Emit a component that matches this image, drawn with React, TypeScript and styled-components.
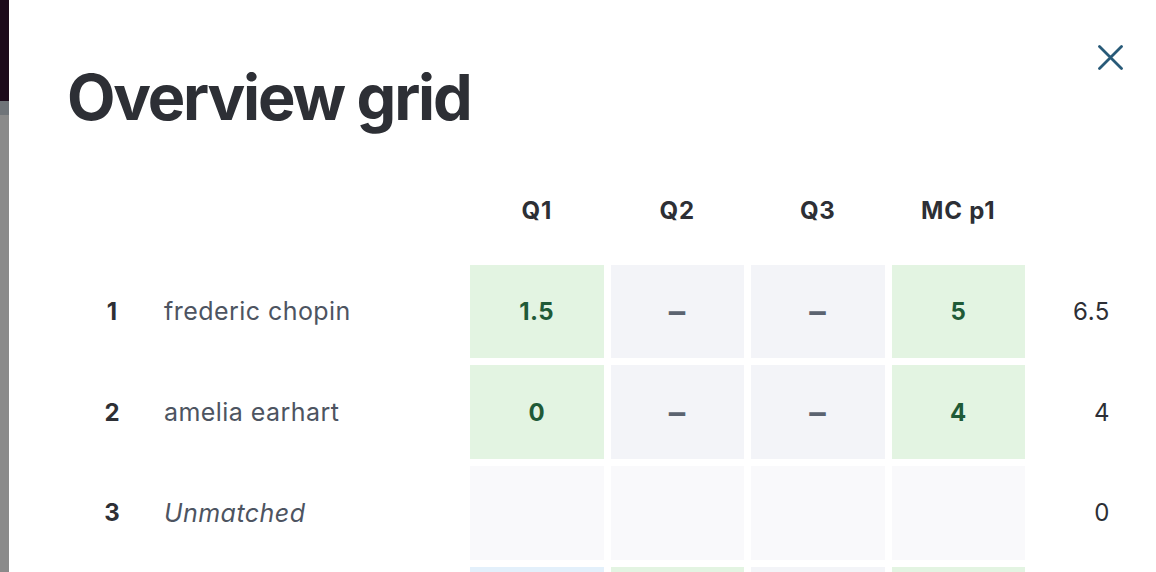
import React from "react";
import styled, { createGlobalStyle } from "styled-components";

const GlobalStyle = createGlobalStyle`
  html, body {
    margin: 0;
    padding: 0;
    overflow: hidden;
    background: #ffffff;
  }
  body {
    font-family: Inter, "Noto Sans", "Liberation Sans", sans-serif;
    -webkit-font-smoothing: antialiased;
  }
`;

const Page = styled.div`
  display: flex;
  height: 572px;
  width: 1156px;
  overflow: hidden;
`;

const Backdrop = styled.div`
  width: 9px;
  flex: none;
  display: flex;
  flex-direction: column;
`;

const BackdropBand = styled.div<{ $h?: number; $c: string }>`
  background: ${(p) => p.$c};
  height: ${(p) => (p.$h ? `${p.$h}px` : "auto")};
  flex: ${(p) => (p.$h ? "none" : "1")};
`;

const Modal = styled.div`
  flex: 1;
  background: #ffffff;
  padding: 45px 33px 0 58px;
  display: flex;
  flex-direction: column;
  min-width: 0;
`;

const Header = styled.div`
  display: flex;
  justify-content: space-between;
  align-items: flex-start;
`;

const Title = styled.h1`
  margin: 21px 0 0 0;
  font-size: 63px;
  line-height: 63px;
  font-weight: 700;
  color: #2d2f35;
  letter-spacing: -2.2px;
`;

const CloseButton = styled.button`
  border: none;
  background: transparent;
  padding: 0;
  width: 25px;
  height: 25px;
  display: flex;
  cursor: pointer;
`;

const Grid = styled.div`
  margin-top: 35px;
  display: grid;
  grid-template-columns: 90px 299px repeat(4, 133.5px) 1fr;
  grid-auto-rows: 93.67px;
  column-gap: 7px;
  row-gap: 7px;
`;

const HeadCell = styled.div`
  display: flex;
  align-items: center;
  justify-content: center;
  font-size: 24px;
  font-weight: 700;
  letter-spacing: 0.8px;
  color: #2d2f35;
`;

const Rank = styled.div`
  display: flex;
  align-items: center;
  justify-content: center;
  font-size: 24px;
  font-weight: 700;
  color: #2d2f35;
`;

const Name = styled.div<{ $muted?: boolean }>`
  display: flex;
  align-items: center;
  font-size: 25px;
  font-weight: 400;
  letter-spacing: 0.45px;
  color: #4d5461;
  font-style: ${(p) => (p.$muted ? "italic" : "normal")};
`;

type Tone = "green" | "grey" | "empty" | "blue";

const toneBg: Record<Tone, string> = {
  green: "#e3f4e2",
  grey: "#f3f4f8",
  empty: "#f9f9fb",
  blue: "#e3f0fb",
};

const toneFg: Record<Tone, string> = {
  green: "#1f5a37",
  grey: "#5b6370",
  empty: "#5b6370",
  blue: "#1f4a6e",
};

const ScoreCell = styled.div<{ $tone: Tone }>`
  display: flex;
  align-items: center;
  justify-content: center;
  background: ${(p) => toneBg[p.$tone]};
  color: ${(p) => toneFg[p.$tone]};
  font-size: ${(p) => (p.$tone === "grey" ? "33px" : "24px")};
  font-weight: 700;
  letter-spacing: 0.4px;
`;

const Total = styled.div`
  display: flex;
  align-items: center;
  justify-content: flex-end;
  padding-right: 13px;
  font-size: 24px;
  font-weight: 400;
  letter-spacing: 0.6px;
  color: #2d2f35;
`;

type Cell = { tone: Tone; text?: string };
type Row = { rank: string; name: string; muted?: boolean; cells: Cell[]; total: string };

const rows: Row[] = [
  {
    rank: "1",
    name: "frederic chopin",
    cells: [
      { tone: "green", text: "1.5" },
      { tone: "grey", text: "–" },
      { tone: "grey", text: "–" },
      { tone: "green", text: "5" },
    ],
    total: "6.5",
  },
  {
    rank: "2",
    name: "amelia earhart",
    cells: [
      { tone: "green", text: "0" },
      { tone: "grey", text: "–" },
      { tone: "grey", text: "–" },
      { tone: "green", text: "4" },
    ],
    total: "4",
  },
  {
    rank: "3",
    name: "Unmatched",
    muted: true,
    cells: [{ tone: "empty" }, { tone: "empty" }, { tone: "empty" }, { tone: "empty" }],
    total: "0",
  },
  {
    rank: "",
    name: "",
    cells: [{ tone: "blue" }, { tone: "green" }, { tone: "grey" }, { tone: "green" }],
    total: "",
  },
];

const columns = ["Q1", "Q2", "Q3", "MC p1"];

export default function App() {
  return (
    <>
      <GlobalStyle />
      <Page>
        <Backdrop>
          <BackdropBand $h={101} $c="#1c0b1b" />
          <BackdropBand $h={14} $c="#6f7479" />
          <BackdropBand $c="#8a8a8a" />
        </Backdrop>
        <Modal>
          <Header>
            <Title>Overview grid</Title>
            <CloseButton aria-label="Close">
              <svg width="25" height="25" viewBox="0 0 25 25" fill="none">
                <path
                  d="M1.5 1.5 L23.5 23.5 M23.5 1.5 L1.5 23.5"
                  stroke="#285a78"
                  strokeWidth="2.8"
                  strokeLinecap="round"
                />
              </svg>
            </CloseButton>
          </Header>
          <Grid>
            <div />
            <div />
            {columns.map((c) => (
              <HeadCell key={c}>{c}</HeadCell>
            ))}
            <div />
            {rows.map((r, i) => (
              <React.Fragment key={i}>
                <Rank>{r.rank}</Rank>
                <Name $muted={r.muted}>{r.name}</Name>
                {r.cells.map((c, j) => (
                  <ScoreCell key={j} $tone={c.tone}>
                    {c.text}
                  </ScoreCell>
                ))}
                <Total>{r.total}</Total>
              </React.Fragment>
            ))}
          </Grid>
        </Modal>
      </Page>
    </>
  );
}
